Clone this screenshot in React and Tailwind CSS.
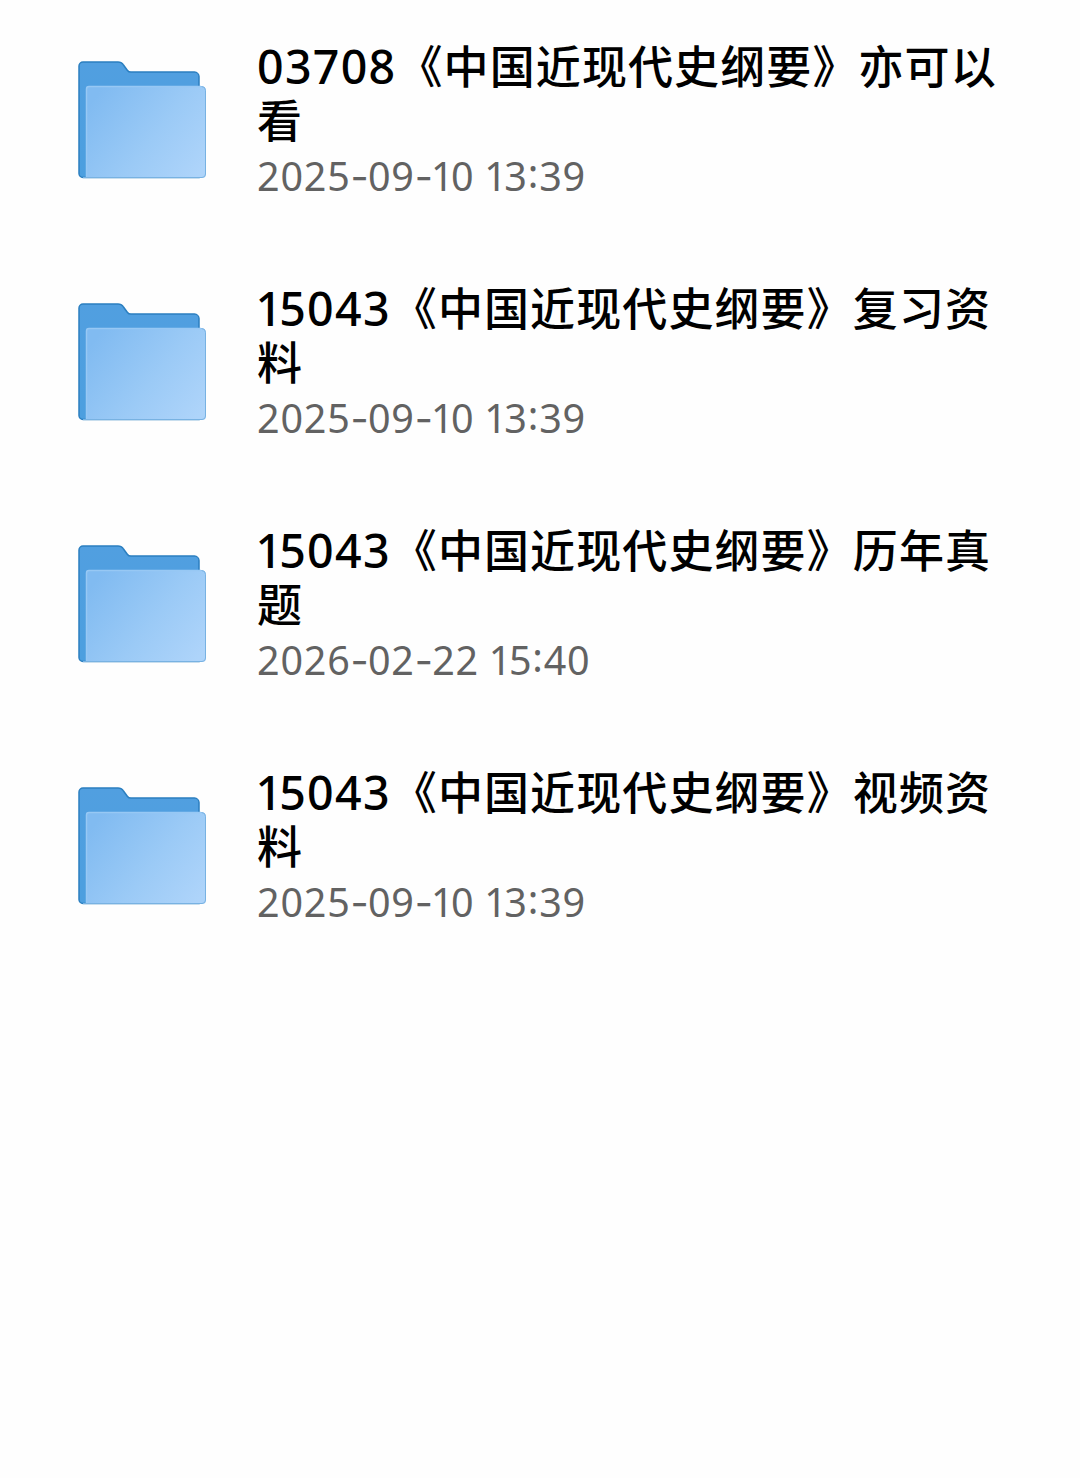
import React from 'react';

const folders = [
  { code: '03708', name: '《中国近现代史纲要》亦可以', rest: '看', date: '2025-09-10', time: '13:39' },
  { code: '15043', name: '《中国近现代史纲要》复习资', rest: '料', date: '2025-09-10', time: '13:39' },
  { code: '15043', name: '《中国近现代史纲要》历年真', rest: '题', date: '2026-02-22', time: '15:40' },
  { code: '15043', name: '《中国近现代史纲要》视频资', rest: '料', date: '2025-09-10', time: '13:39' },
];

// "1" is set tighter than the other figures, dashes are a little wider
// and the colon is centred on the figures
const Figures = ({ text }) =>
  text.split(/([1:-])/).map((part, index) => {
    if (part === '1') {
      return (
        <span key={index} className="-ml-[0.03em] tracking-[-0.065em]">
          1
        </span>
      );
    }
    if (part === '-') {
      return (
        <span key={index} className="font-['Inter'] tracking-[-0.02em]">
          -
        </span>
      );
    }
    if (part === ':') {
      return (
        <span key={index} className="relative -top-[3px]">
          :
        </span>
      );
    }
    return part;
  });

const FolderIcon = () => (
  <svg viewBox="0 0 130 120" className="w-[130px] h-[120px] shrink-0" fill="none">
    <defs>
      <linearGradient id="folderBack" x1="0" y1="0" x2="0" y2="1">
        <stop offset="0" stopColor="#519fe0" />
        <stop offset="1" stopColor="#4c9fdf" />
      </linearGradient>
      <linearGradient id="folderFront" x1="0" y1="0.25" x2="1" y2="0.85">
        <stop offset="0" stopColor="#81bbf1" />
        <stop offset="0.55" stopColor="#9bcaf6" />
        <stop offset="1" stopColor="#aed4fa" />
      </linearGradient>
    </defs>
    <path
      d="M2 6a4 4 0 0 1 4-4H41c2.500 0 4 .8 5.300 2.700l4 5.500c1 1.400 2 1.900 3.700 1.900h63.500a4.500 4.500 0 0 1 4.500 4.500V117.500H6a4 4 0 0 1-4-4Z"
      fill="url(#folderBack)"
      stroke="#2b7fc0"
      strokeWidth="1.500"
    />
    <path d="M9 28.500a2.500 2.500 0 0 1 2.500-2.500h113a4.500 4.500 0 0 1 4.500 4.500v83.500a4 4 0 0 1-4 4H9Z" fill="url(#folderFront)" />
    <path d="M9.500 117V29a2.500 2.500 0 0 1 2.500-2.500H124" stroke="#97c8f4" strokeWidth="1.500" />
    <path d="M124.500 26.500a4 4 0 0 1 4 4v83.500a3.500 3.500 0 0 1-3.500 3.500H6" stroke="#78b2e2" strokeWidth="1" />
  </svg>
);

const FolderRow = ({ folder }) => (
  <li className="flex h-[242px] items-start">
    <div className="pt-[60px]">
      <FolderIcon />
    </div>
    <div className="ml-[50px] pt-[38px]">
      <h2 className="text-[45px] font-medium leading-[54px] tracking-[1.1px] text-black whitespace-nowrap">
        <span className="block h-[54px]">
          <span className="mr-[1px] font-['Noto_Sans'] text-[46.5px] leading-none tracking-[1.3px]">
            <Figures text={folder.code} />
          </span>
          {folder.name}
        </span>
        <span className="block h-[54px]">{folder.rest}</span>
      </h2>
      <p className="mt-0.5 font-['Noto_Sans'] text-[39.5px] leading-[56px] tracking-[0.8px] text-[#626262] whitespace-nowrap">
        <Figures text={`${folder.date} ${folder.time}`} />
      </p>
    </div>
  </li>
);

export default function App() {
  return (
    <main className="min-h-screen w-full overflow-hidden bg-[#fefefe] font-['Noto_Sans_CJK_SC',sans-serif]">
      <ul className="pl-[77px]">
        {folders.map((folder, index) => (
          <FolderRow key={index} folder={folder} />
        ))}
      </ul>
    </main>
  );
}
